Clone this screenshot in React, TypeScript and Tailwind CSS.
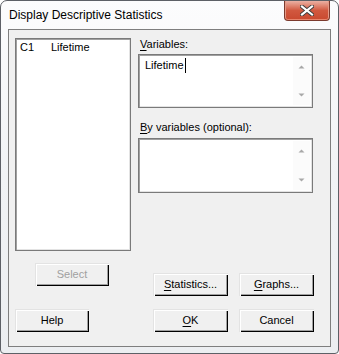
import React from "react";

const FONT = "font-['Liberation_Sans',Arial,sans-serif]";

function Btn({
  children,
  className = "",
  disabled = false,
}: {
  children: React.ReactNode;
  className?: string;
  disabled?: boolean;
}) {
  return (
    <div
      className={`flex h-[23px] items-center justify-center bg-[#f0f0f0] text-[11px] leading-[13px] shadow-[inset_1px_1px_#e3e3e3,inset_2px_2px_#ffffff,inset_-1px_-1px_#000000,inset_-2px_-2px_#a0a0a0] ${
        disabled ? "text-[#a0a0a0]" : "text-black"
      } ${className}`}
    >
      {children}
    </div>
  );
}

function Scroller() {
  return (
    <div className="flex w-[17px] flex-col justify-between bg-[#fbfbfb] py-[7px]">
      <svg width="17" height="5" viewBox="0 0 17 5">
        <path d="M5.5 4.5 L8.5 1.5 L11.5 4.5 Z" fill="#a8a8a8" />
      </svg>
      <svg width="17" height="5" viewBox="0 0 17 5">
        <path d="M5.5 0.5 L8.5 3.5 L11.5 0.5 Z" fill="#a8a8a8" />
      </svg>
    </div>
  );
}

function Sunken({
  className = "",
  children,
}: {
  className?: string;
  children?: React.ReactNode;
}) {
  return (
    <div
      className={`flex border border-[#7a7a7a] bg-white shadow-[inset_1px_1px_#a0a0a0,inset_-1px_-1px_#e3e3e3] ${className}`}
    >
      {children}
    </div>
  );
}

function U({ children }: { children: React.ReactNode }) {
  return <span className="underline underline-offset-[2px]">{children}</span>;
}

export default function App() {
  return (
    <div className={`h-[354px] w-[339px] bg-white ${FONT}`}>
      <div className="flex h-[354px] w-[339px] flex-col rounded-t-[7px] rounded-b-[4px] border border-[#5d6066] bg-gradient-to-b from-[#fcfcfd] via-[#f1f3f5] to-[#eceef1]">
        {/* title bar */}
        <div className="flex h-[28px] items-start justify-between">
          <div className="pl-[8px] pt-[6px] text-[12px] leading-[16px] text-black">
            Display Descriptive Statistics
          </div>
          <div className="mr-[8px] flex h-[20px] w-[46px] items-center justify-center rounded-b-[4px] border border-t-0 border-[#7b3a2e] bg-gradient-to-b from-[#eab0a3] via-[#d1583f] to-[#c9492f] shadow-[inset_0_-1px_#e8866e,inset_1px_0_#e49a87,inset_-1px_0_#e49a87]">
            <svg width="14" height="11" viewBox="0 0 14 11">
              <path
                d="M2 1.5 L12 9.5 M12 1.5 L2 9.5"
                stroke="#3c3c3c"
                strokeWidth="4"
                strokeLinecap="square"
              />
              <path
                d="M2 1.5 L12 9.5 M12 1.5 L2 9.5"
                stroke="#ffffff"
                strokeWidth="2.2"
                strokeLinecap="square"
              />
            </svg>
          </div>
        </div>

        {/* client area */}
        <div className="ml-[7px] flex h-[318px] w-[323px] flex-col border border-[#7e7e7e] bg-[#f0f0f0] pl-[6px] pt-[8px]">
          <div className="flex">
            <Sunken className="h-[213px] w-[116px] flex-col pl-[4px] pt-[2px]">
              <div className="flex text-[11px] leading-[13px] text-black">
                <span className="w-[31px]">C1</span>
                <span>Lifetime</span>
              </div>
            </Sunken>
            <div className="ml-[7px] flex w-[175px] flex-col">
              <div className="h-[13px] pl-[2px] text-[11px] leading-[13px] text-black">
                <U>V</U>ariables:
              </div>
              <Sunken className="mt-[3px] h-[54px] justify-between p-[2px]">
                <div className="flex items-start pl-[4px] pt-[2px] text-[11px] leading-[13px] text-black">
                  Lifetime
                  <span className="ml-[1px] mt-[-1px] h-[15px] w-px bg-black" />
                </div>
                <Scroller />
              </Sunken>
              <div className="mt-[13px] h-[13px] pl-[2px] text-[11px] leading-[13px] text-black">
                <U>B</U>y variables (optional):
              </div>
              <Sunken className="mt-[4px] h-[55px] justify-end p-[2px]">
                <Scroller />
              </Sunken>
            </div>
          </div>

          <div className="flex items-start">
            <Btn disabled className="ml-[20px] mt-[12px] w-[74px]">
              Select
            </Btn>
            <Btn className="ml-[44px] mt-[22px] w-[75px]">
              <U>S</U>tatistics...
            </Btn>
            <Btn className="ml-[11px] mt-[22px] w-[75px]">
              <U>G</U>raphs...
            </Btn>
          </div>

          <div className="mt-[13px] flex">
            <Btn className="w-[74px]">Help</Btn>
            <Btn className="ml-[64px] w-[75px]">
              <U>O</U>K
            </Btn>
            <Btn className="ml-[11px] w-[75px]">Cancel</Btn>
          </div>
        </div>
      </div>
    </div>
  );
}
